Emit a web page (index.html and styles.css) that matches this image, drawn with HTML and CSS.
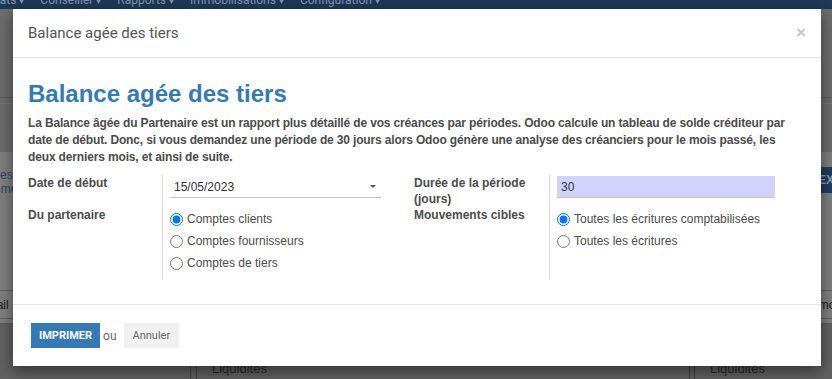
FILE: index.html
```html
<!DOCTYPE html>
<html lang="fr">
<head>
    <meta charset="UTF-8">
    <title>Balance agée des tiers</title>
    <link rel="stylesheet" href="styles.css">
</head>
<body>
    <div class="page">
        <nav class="topbar">
            <div class="menu">
                <span class="menu-item">Achats <span class="menu-caret">▾</span></span>
                <span class="menu-item">Conseiller <span class="menu-caret">▾</span></span>
                <span class="menu-item">Rapports <span class="menu-caret">▾</span></span>
                <span class="menu-item">Immobilisations <span class="menu-caret">▾</span></span>
                <span class="menu-item">Configuration <span class="menu-caret">▾</span></span>
            </div>
        </nav>
        <div class="control-panel">
            <div class="cp-line"></div>
        </div>
        <div class="sheet">
            <div class="sheet-head">
                <div class="sheet-links">Factures<br>Problèmes</div>
                <div class="sheet-button">EXPORTER</div>
            </div>
            <div class="sheet-row">
                <span class="cell-left">Détail</span>
                <span class="cell-right">montant</span>
            </div>
            <div class="ledger">
                <div class="ledger-col first"></div>
                <div class="ledger-col">Liquidités</div>
                <div class="ledger-col last">Liquidités</div>
            </div>
        </div>
    </div>

    <div class="modal">
        <div class="modal-header">
            <h4 class="modal-title">Balance agée des tiers</h4>
            <span class="close">×</span>
        </div>
        <div class="modal-body">
            <h2 class="report-title">Balance agée des tiers</h2>
            <p class="intro">La Balance âgée du Partenaire est un rapport plus détaillé de vos créances par périodes. Odoo calcule un tableau de solde créditeur par date de début. Donc, si vous demandez une période de 30 jours alors Odoo génère une analyse des créanciers pour le mois passé, les deux derniers mois, et ainsi de suite.</p>
            <div class="form">
                <div class="group group-left">
                    <div class="label">Date de début</div>
                    <div class="field">
                        <div class="input">15/05/2023<span class="caret"></span></div>
                    </div>
                    <div class="label">Du partenaire</div>
                    <div class="field">
                        <ul class="radios">
                            <li class="radio"><input type="radio" name="partner" checked>Comptes clients</li>
                            <li class="radio"><input type="radio" name="partner">Comptes fournisseurs</li>
                            <li class="radio"><input type="radio" name="partner">Comptes de tiers</li>
                        </ul>
                    </div>
                </div>
                <div class="group group-right">
                    <div class="label">Durée de la période (jours)</div>
                    <div class="field">
                        <div class="input required">30</div>
                    </div>
                    <div class="label">Mouvements cibles</div>
                    <div class="field">
                        <ul class="radios">
                            <li class="radio"><input type="radio" name="moves" checked>Toutes les écritures comptabilisées</li>
                            <li class="radio"><input type="radio" name="moves">Toutes les écritures</li>
                        </ul>
                    </div>
                </div>
            </div>
        </div>
        <div class="modal-footer">
            <button class="btn btn-primary">IMPRIMER</button>
            <span class="or">ou</span>
            <button class="btn btn-default">Annuler</button>
        </div>
    </div>
</body>
</html>
```

FILE: styles.css
```css
body {
    margin: 0;
    height: 379px;
    overflow: hidden;
    position: relative;
    font-family: "Liberation Sans", Arial, sans-serif;
    background-color: #6b6b6b;
}

/* page behind the backdrop */
.page {
    display: flex;
    flex-direction: column;
    height: 379px;
    overflow: hidden;
}

.topbar {
    height: 9px;
    overflow: hidden;
    background-color: #1c3a59;
    font-family: Roboto, sans-serif;
    font-size: 12px;
    line-height: 12px;
    color: #8497ad;
}

.menu {
    display: flex;
    gap: 16px;
    margin: -6px 0 0 -21px;
    white-space: nowrap;
}

.menu-caret {
    font-size: 10px;
}

.control-panel {
    height: 143px;
    background-color: #6d6d6d;
}

.cp-line {
    margin-top: 88px;
    height: 5px;
    border-top: 1px solid #5a5a5a;
    border-bottom: 1px solid #7a7a7a;
}

.sheet {
    flex: 1;
    display: flex;
    flex-direction: column;
    background-color: #808080;
}

.sheet-head {
    height: 138px;
    display: flex;
    justify-content: space-between;
    align-items: flex-start;
    overflow: hidden;
}

.sheet-links {
    margin: 16px 0 0 -34px;
    font-size: 12px;
    line-height: 14px;
    color: #2c4866;
}

.sheet-button {
    flex-shrink: 0;
    margin: 15px -60px 0 0;
    padding: 0 8px 0 1px;
    height: 26px;
    line-height: 26px;
    font-size: 12px;
    font-weight: bold;
    color: #8e9cab;
    background-color: #203e5e;
}

.sheet-row {
    height: 27px;
    display: flex;
    justify-content: space-between;
    align-items: center;
    border-top: 1px solid #5e5e5e;
    border-bottom: 1px solid #5e5e5e;
    font-size: 12px;
    color: #1e1e1e;
}

.cell-left {
    margin-left: -22px;
}

.cell-right {
    margin-right: -30px;
}

.ledger {
    flex: 1;
    display: flex;
    overflow: hidden;
    margin-top: 4px;
    border-top: 1px solid #5e5e5e;
    background-color: #626262;
}

.ledger-col {
    flex-shrink: 0;
    width: 477px;
    padding: 37px 0 0 15px;
    border-left: 1px solid #3f3f3f;
    border-right: 1px solid #3f3f3f;
    font-size: 13px;
    color: #2a2a2a;
}

.ledger-col.first {
    width: 190px;
    padding: 0;
    border-left: none;
    margin-right: 5px;
}

.ledger-col.last {
    margin-left: 4px;
    border-right: none;
}

/* dialog */
.modal {
    position: absolute;
    top: 9px;
    left: 13px;
    width: 808px;
    background-color: #fff;
    box-shadow: 0 5px 15px rgba(0, 0, 0, 0.5);
}

.modal-header {
    display: flex;
    justify-content: space-between;
    align-items: center;
    padding: 15px;
    border-bottom: 1px solid #e5e5e5;
}

.modal-title {
    margin: 0;
    font-family: Roboto, sans-serif;
    font-size: 15px;
    font-weight: normal;
    line-height: 18px;
    color: #555;
}

.close {
    font-size: 17px;
    font-weight: bold;
    line-height: 18px;
    color: #c6c6c6;
}

.modal-body {
    padding: 23px 15px 24px;
}

.report-title {
    margin: 0 0 8px;
    font-size: 24px;
    line-height: 26px;
    font-weight: bold;
    color: #337ab7;
}

.intro {
    max-width: 762px;
    margin: 0 0 9px;
    font-size: 12px;
    line-height: 17px;
    font-weight: bold;
    letter-spacing: -0.15px;
    color: #4c4c4c;
}

.form {
    display: flex;
}

.group {
    display: grid;
    grid-template-rows: 32px 73px;
}

.group-left {
    grid-template-columns: 134px 219px;
    margin-right: 33px;
}

.group-right {
    grid-template-columns: 135px 226px;
}

.label {
    font-size: 12px;
    line-height: 16px;
    font-weight: bold;
    color: #4c4c4c;
}

.field {
    border-left: 1px solid #d9d9d9;
    padding-left: 7px;
}

.input {
    display: flex;
    align-items: center;
    margin-top: 1px;
    height: 21px;
    padding-left: 4px;
    border-bottom: 1px solid #c4c4c4;
    font-size: 12px;
    color: #333;
}

.input.required {
    background-color: #d2d2ff;
}

.caret {
    margin-left: auto;
    margin-right: 5px;
    border-left: 3px solid transparent;
    border-right: 3px solid transparent;
    border-top: 3px solid #555;
}

.radios {
    list-style: none;
    margin: 1px 0 0;
    padding: 0;
}

.radio {
    display: flex;
    align-items: center;
    height: 22px;
    font-size: 12px;
    color: #4c4c4c;
}

.radio input {
    width: 13px;
    height: 13px;
    margin: 0 4px 0 0;
}

.modal-footer {
    display: flex;
    align-items: center;
    padding: 18px;
    border-top: 1px solid #e5e5e5;
}

.btn {
    height: 25px;
    padding: 0 9px;
    border: none;
    border-radius: 0;
    font-family: Roboto, sans-serif;
    font-size: 11px;
    cursor: pointer;
}

.btn-primary {
    padding: 0 8px;
    font-weight: bold;
    color: #fff;
    background-color: #337ab7;
}

.btn-default {
    color: #666;
    background-color: #f0f0f0;
}

.or {
    margin: 0 7px 0 3px;
    font-family: Roboto, sans-serif;
    font-size: 12px;
    color: #666;
}
```
